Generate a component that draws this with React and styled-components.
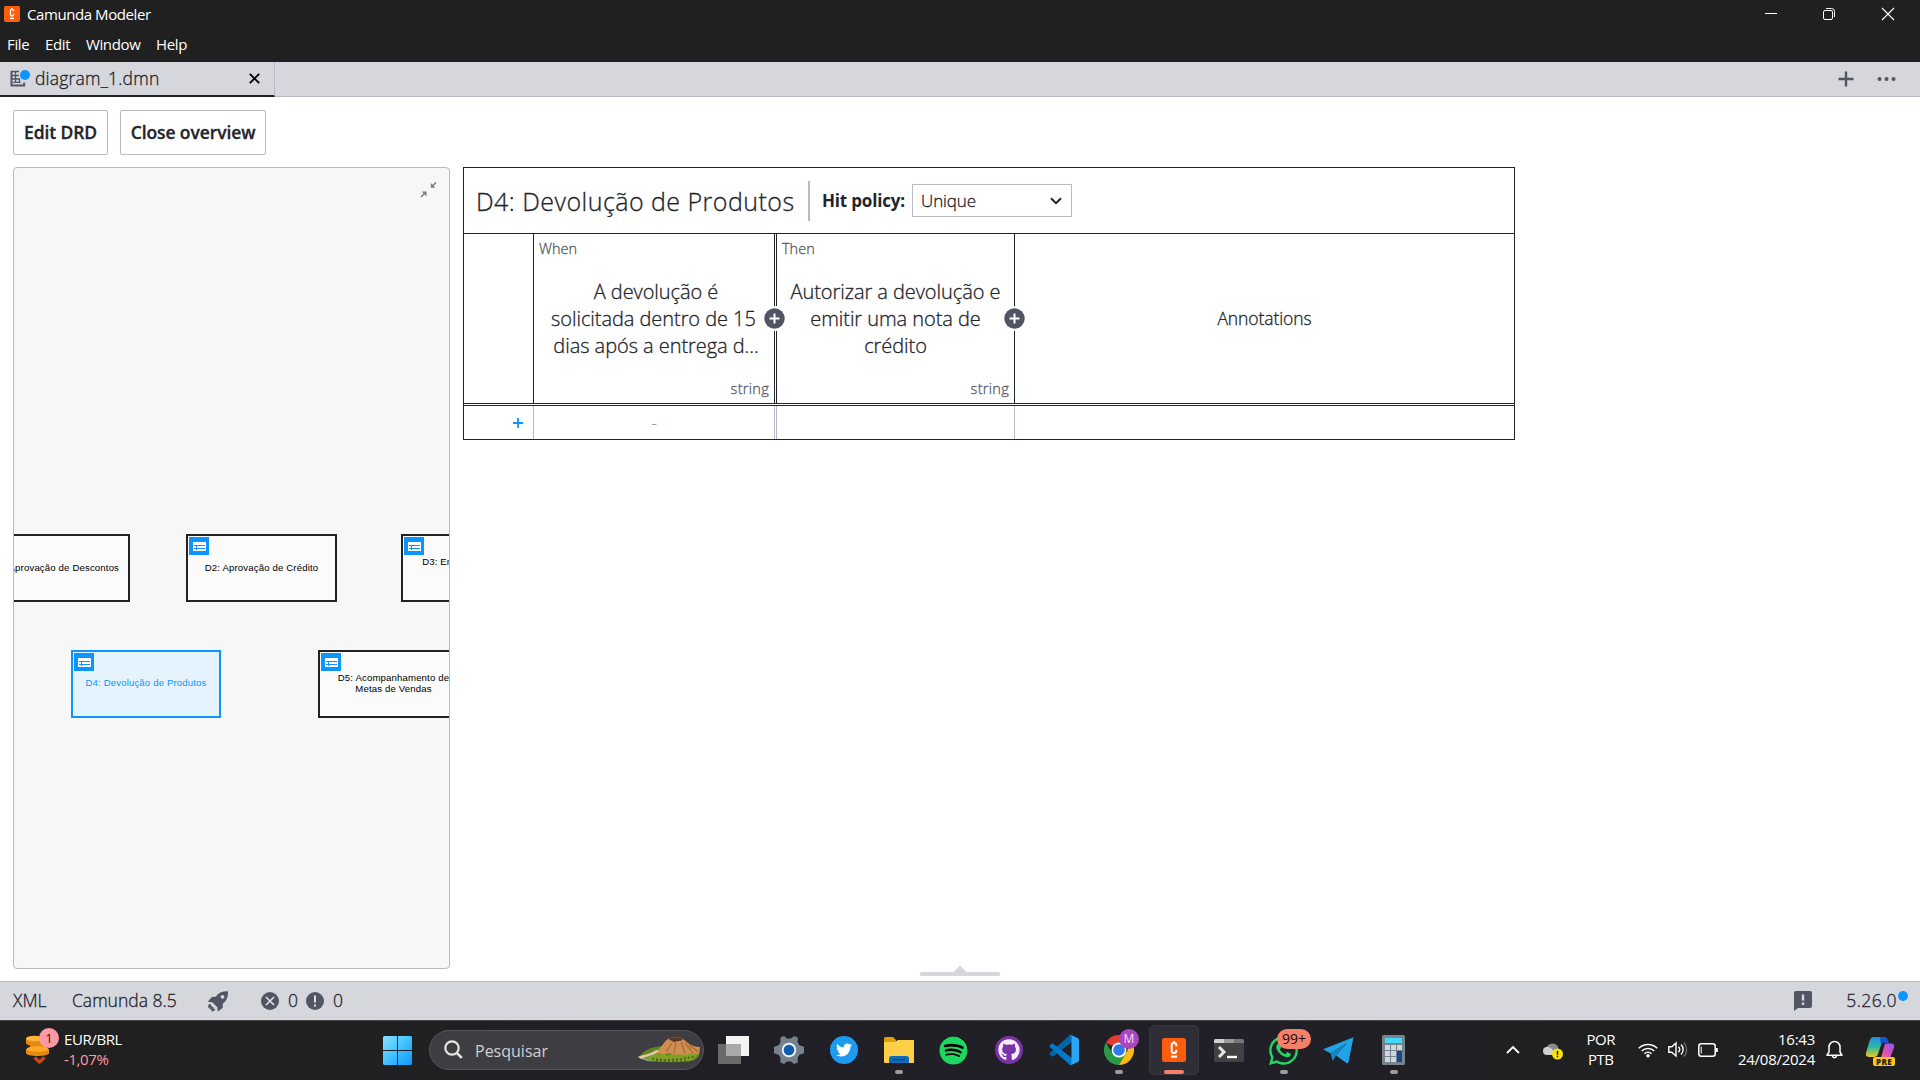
import React from 'react';
import styled, { createGlobalStyle, css } from 'styled-components';
import { FaTwitter, FaSpotify, FaGithub, FaWhatsapp } from 'react-icons/fa';

const ink = '#22242a';
const line = '#b9b9c8';
const bar = '#d6d7dc';
const slate = '#515664';
const blue = '#0d95ff';
const sans = '"Open Sans", "Noto Sans", sans-serif';

const Global = createGlobalStyle`
  * { box-sizing: border-box; }
  html, body { margin: 0; height: 100%; overflow: hidden; }
  #root { height: 100%; }
  svg { display: block; flex: none; }
  button { font: inherit; }
`;

const light = css`
  font-weight: 300;
  -webkit-text-stroke: 0.3px currentColor;
`;
const plain = css`
  -webkit-text-stroke: 0;
`;

const Screen = styled.div`
  display: flex;
  flex-direction: column;
  width: 1920px;
  height: 1080px;
  background: #fff;
  color: ${ink};
  font-family: ${sans};
  font-size: 17.5px;
  ${light}
  white-space: nowrap;
`;

/* Window chrome */
const Chrome = styled.header`
  height: 62px;
  background: #202020;
  color: #fff;
  font-size: 15px;
  font-weight: 400;
  ${plain}
`;
const TitleBar = styled.div`
  display: flex;
  align-items: center;
  height: 28px;
  padding-left: 4px;
  letter-spacing: -0.42px;
`;
const TitleText = styled.div`
  flex: 1;
  margin-left: 7px;
`;
const WindowControls = styled.div`
  display: flex;
  align-items: center;
  gap: 44px;
  padding-right: 25px;
  svg:last-child { margin-left: 1px; }
`;
const MenuBar = styled.nav`
  display: flex;
  align-items: center;
  gap: 15.7px;
  height: 32px;
  padding-left: 7px;
  letter-spacing: -0.36px;
`;

/* Tabs */
const TabBar = styled.div`
  display: flex;
  height: 35px;
  background: ${bar};
  border-bottom: 1px solid ${line};
`;
const Tab = styled.div`
  display: flex;
  align-items: center;
  width: 275px;
  height: 35px;
  padding: 0 14px 0 10px;
  border-right: 1px solid ${line};
  border-bottom: 2px solid ${ink};
`;
const TabName = styled.span`
  flex: 1;
  margin: -1px 0 0 5px;
  letter-spacing: 0.2px;
`;
const TabActions = styled.div`
  display: flex;
  align-items: center;
  gap: 23px;
  margin-left: auto;
  padding-right: 24px;
`;

/* Editor */
const Editor = styled.main`
  flex: 1;
  display: flex;
  flex-direction: column;
  padding: 13px 13px 12px;
`;
const Toolbar = styled.div`
  display: flex;
  gap: 12px;
  margin-bottom: 12px;
`;
const ToolButton = styled.button`
  width: ${(p) => p.$w}px;
  height: 45px;
  padding: 0 0 2px;
  border: 1px solid ${line};
  border-radius: 2px;
  background: #fff;
  color: ${ink};
  font-weight: 600;
  letter-spacing: -0.1px;
`;
const Panes = styled.div`
  display: flex;
  align-items: flex-start;
  gap: 13px;
`;

const Overview = styled.section`
  position: relative;
  width: 437px;
  height: 802px;
  overflow: hidden;
  border: 1px solid ${line};
  border-radius: 4px;
  background: #f7f7f7;
  ${plain}
`;
const Collapse = styled.div`
  position: absolute;
  top: 13px;
  right: 12px;
`;
const Node = styled.div`
  position: absolute;
  left: ${(p) => p.$x}px;
  top: ${(p) => p.$y}px;
  display: flex;
  align-items: center;
  justify-content: center;
  width: ${(p) => p.$w || 151}px;
  height: 68px;
  padding-bottom: ${(p) => p.$lift || 2}px;
  border: 2px solid ${(p) => (p.$active ? blue : '#222')};
  background: ${(p) => (p.$active ? '#e5f3ff' : '#fbfbfb')};
  color: ${(p) => (p.$active ? blue : '#000')};
  font: 400 9.6px/11px "Liberation Sans", Arial, sans-serif;
  letter-spacing: 0.15px;
  text-align: center;
  white-space: pre;
`;
const NodeIcon = styled.span`
  position: absolute;
  left: 1px;
  top: 1px;
`;

/* Decision table */
const Table = styled.section`
  width: 1052px;
  border: 1px solid ${ink};
`;
const TableHead = styled.div`
  display: flex;
  align-items: center;
  height: 66px;
  padding-left: 12px;
  border-bottom: 1px solid ${ink};
`;
const TableTitle = styled.h1`
  width: 332px;
  margin: 1px 0 0;
  font-size: 25px;
  ${light}
  letter-spacing: 0.46px;
`;
const Divider = styled.div`
  width: 2px;
  height: 40px;
  margin-right: 12px;
  background: ${line};
`;
const PolicyLabel = styled.label`
  width: 90px;
  font-weight: 700;
  font-size: 17px;
  letter-spacing: -0.18px;
  ${plain}
`;
const Select = styled.div`
  display: flex;
  align-items: center;
  justify-content: space-between;
  width: 160px;
  height: 33px;
  padding: 0 9px 0 8px;
  border: 1px solid ${line};
  font-size: 17px;
  letter-spacing: -0.1px;
`;
const Columns = styled.div`
  display: grid;
  grid-template-columns: 69px 241px 240px 1fr;
`;
const HeadRow = styled(Columns)`
  height: 170px;
  border-bottom: 1px solid ${ink};
`;
const RuleRow = styled(Columns)`
  height: 34px;
  margin-top: 1px;
  border-top: 1px solid ${ink};
`;
const cellBorder = (color) => css`
  border-left: ${(p) => (p.$double ? `3px double ${color}` : p.$first ? '0' : `1px solid ${color}`)};
`;
const HeadCell = styled.div`
  position: relative;
  display: grid;
  grid-template-rows: 29px 1fr 30px;
  padding: 0 5px;
  ${cellBorder(ink)}
`;
const Small = styled.div`
  align-self: center;
  justify-self: ${(p) => (p.$end ? 'end' : 'start')};
  color: #555962;
  font-size: 14.5px;
  letter-spacing: ${(p) => (p.$end ? 0.3 : 0)}px;
`;
const Expression = styled.div`
  align-self: center;
  padding: 1px 0 0 ${(p) => p.$indent || 0}px;
  font-size: 20px;
  line-height: 27px;
  letter-spacing: -0.06px;
  text-align: center;
  white-space: pre;
`;
const AnnotationHead = styled.div`
  display: flex;
  align-items: center;
  justify-content: center;
  padding-bottom: 2px;
  letter-spacing: -0.08px;
  ${cellBorder(ink)}
`;
const AddColumn = styled.div`
  position: absolute;
  top: 72px;
  right: -11px;
  z-index: 1;
  display: flex;
  align-items: center;
  height: 25px;
  background: #fff;
`;
const RuleCell = styled.div`
  display: flex;
  align-items: center;
  justify-content: ${(p) => (p.$first ? 'flex-end' : 'center')};
  padding-right: ${(p) => (p.$first ? 10 : 0)}px;
  color: #9da0ac;
  ${cellBorder(line)}
`;

/* Bottom panel */
const Resizer = styled.div`
  display: flex;
  justify-content: center;
  height: 0;
  svg { margin-top: -16px; z-index: 1; }
`;
const StatusBar = styled.footer`
  display: flex;
  align-items: center;
  height: 39px;
  padding: 0 12px 0 13px;
  border-top: 1px solid ${line};
  background: ${bar};
`;
const StatusItem = styled.div`
  display: flex;
  align-items: center;
  gap: ${(p) => p.$gap || 0}px;
  width: ${(p) => p.$w}px;
`;
const StatusText = styled.span`
  margin-top: -2px;
`;
const StatusEnd = styled.div`
  display: flex;
  align-items: center;
  gap: 34px;
  margin-left: auto;
`;
const Version = styled.div`
  display: flex;
  margin-top: -2px;
  letter-spacing: 0.4px;
`;
const UpdateDot = styled.i`
  width: 10px;
  height: 10px;
  margin: 3px 0 0 1px;
  border-radius: 50%;
  background: ${blue};
`;

/* Windows taskbar */
const Taskbar = styled.div`
  display: flex;
  align-items: center;
  height: 60px;
  border-top: 1px solid #47474a;
  background: linear-gradient(90deg, #202020 0, #202020 14%, #211f26 34%, #211f27 66%, #202020 86%);
  color: #fff;
  font-size: 15px;
  font-weight: 400;
  ${plain}
`;
const Widget = styled.div`
  display: flex;
  align-items: center;
  width: 370px;
  height: 59px;
  padding: 0 0 3px 25px;
`;
const TwoLines = styled.div`
  margin-left: ${(p) => p.$ml || 0}px;
  line-height: 20px;
  letter-spacing: ${(p) => p.$ls}px;
  text-align: ${(p) => p.$align || 'left'};
  em { color: #ff99a4; font-style: normal; }
`;
const CoinBox = styled.div`
  position: relative;
  width: 34px;
  height: 42px;
`;
const CoinBadge = styled.span`
  position: absolute;
  left: 14px;
  top: 0;
  width: 20px;
  height: 20px;
  border-radius: 50%;
  background: #ff99a4;
  color: #222;
  font-size: 13px;
  line-height: 20px;
  text-align: center;
`;
const TaskSlot = styled.div`
  position: relative;
  display: flex;
  align-items: center;
  justify-content: center;
  width: 55px;
  height: 50px;
  margin-bottom: 1px;
`;
const ActivePlate = styled.div`
  display: flex;
  align-items: center;
  justify-content: center;
  width: 50px;
  height: 50px;
  border: 1px solid #38363f;
  border-radius: 5px;
  background: #2f2d36;
`;
const Indicator = styled.i`
  position: absolute;
  left: 50%;
  bottom: 1px;
  width: ${(p) => (p.$active ? 20 : 8)}px;
  height: 4px;
  margin-left: ${(p) => (p.$active ? -10 : -4)}px;
  border-radius: 2px;
  background: ${(p) => (p.$active ? '#f4806a' : '#9c9ca0')};
`;
const Disc = styled.div`
  display: flex;
  align-items: center;
  justify-content: center;
  width: 28px;
  height: 28px;
  border-radius: 50%;
  background: ${(p) => p.$bg};
`;
const Search = styled.div`
  display: flex;
  align-items: center;
  width: 275px;
  height: 40px;
  margin: 0 2px 2px 4px;
  padding: 0 3px 0 14px;
  border: 1px solid #56555a;
  border-radius: 20px;
  background: #3e3d42;
  color: #d0d0d2;
  font-size: 16px;
  letter-spacing: 0;
`;
const SearchText = styled.span`
  flex: 1;
  margin: 2px 0 0 12px;
`;
const Badge = styled.span`
  position: absolute;
  left: ${(p) => p.$x}px;
  top: ${(p) => p.$y}px;
  width: ${(p) => p.$w}px;
  height: 20px;
  border-radius: 10px;
  background: ${(p) => p.$bg};
  color: ${(p) => p.$fg};
  font-size: ${(p) => p.$size}px;
  line-height: 20px;
  text-align: center;
`;
const Tray = styled.div`
  display: flex;
  align-items: center;
  margin-left: auto;
  padding: 0 24px 3px 0;
`;
const TrayIcon = styled.div`
  margin: ${(p) => p.$top || 0}px 0 0 ${(p) => p.$ml}px;
`;
const Copilot = styled.div`
  position: relative;
  margin-left: 23px;
  margin-top: 4px;
`;
const Pre = styled.span`
  position: absolute;
  left: 7px;
  bottom: -1px;
  width: 22px;
  height: 9px;
  border-radius: 2px;
  background: #ffc61a;
  color: #222;
  font-size: 8px;
  font-weight: 800;
  line-height: 9px;
  letter-spacing: 0.3px;
  text-align: center;
`;

const CamundaLogo = ({ size }) => (
  <svg width={size} height={size} viewBox="0 0 24 24">
    <rect width="24" height="24" rx="2.5" fill="#fc5d0d" />
    <path d="M14.3 8.2V7c0-1.400-.9-2-2.300-2s-2.300.7-2.300 2.100v5.800c0 1.400.9 2.100 2.300 2.100s2.300-.7 2.300-2.100v-1.100M12 3v2" fill="none" stroke="#fff" strokeWidth="2" />
    <path d="M9 18.600h6" stroke="#fff" strokeWidth="2.200" />
  </svg>
);

const DmnTabIcon = () => (
  <svg width="20" height="17" viewBox="0 0 20 17">
    <path d="M1.500 1v14.500h12.700v-3" fill="none" stroke={slate} strokeWidth="2" />
    <path d="M1 1.500h8M5.500 1v11.500M1 5.500h8M1 9h9M3 12.300h7.500M9.500 8v4.500" fill="none" stroke={slate} strokeWidth="1.300" />
    <circle cx="15" cy="5" r="5" fill={blue} />
  </svg>
);

const TableGlyph = () => (
  <NodeIcon>
    <svg width="20" height="18" viewBox="0 0 20 18" shapeRendering="crispEdges">
      <path d="M0 0h20v18H0z" fill={blue} />
      <path d="M4 5h13v9H4z" fill="#fff" />
      <path d="M5 8h11v1H5zM5 11h11v1H5zM7 8h1v5H7z" fill={blue} />
    </svg>
  </NodeIcon>
);

const PlusDisc = () => (
  <svg width="21" height="21" viewBox="0 0 21 21">
    <circle cx="10.500" cy="10.500" r="10.200" fill="#4f5563" />
    <path d="M10.500 5.500v10M5.500 10.500h10" stroke="#fff" strokeWidth="2" />
  </svg>
);

const nodes = [
  { x: -34, y: 366, w: 150, text: 'D1: Aprovação de Descontos' },
  { x: 172, y: 366, text: 'D2: Aprovação de Crédito' },
  { x: 387, y: 366, text: 'D3: Encaminhamento de\nPedidos', lift: 3 },
  { x: 57, y: 482, w: 150, text: 'D4: Devolução de Produtos', active: true, lift: 4 },
  { x: 304, y: 482, text: 'D5: Acompanhamento de\nMetas de Vendas', lift: 3 },
];

const Windows = () => (
  <svg width="29" height="29" viewBox="0 0 29 29">
    <defs>
      <linearGradient id="win" x1="0" y1="0" x2="1" y2="1">
        <stop offset="0" stopColor="#8be0ff" />
        <stop offset=".5" stopColor="#42c2ff" />
        <stop offset="1" stopColor="#0a96ff" />
      </linearGradient>
    </defs>
    <path d="M1 0h13v14H0V1zM15 0h13l1 1v13H15zM0 15h14v14H1l-1-1zM15 15h14v13l-1 1H15z" fill="url(#win)" />
  </svg>
);

const Volcano = () => (
  <svg width="62" height="26" viewBox="0 0 62 26">
    <path d="M0 20c4-3 8-8 15-9.500l8-1.500 30 6 9-5-1 9c-4 6-12 6-20 6-14 0-30 1-41-5z" fill="#5f8420" />
    <path d="M2 20c5 1 8 3 14 4-6 1-12-1-14-4z" fill="#7fae8c" />
    <path d="M18 15C24 10 27 3 31 1.500 35-.3 42 0 45 2c4 3 8 8 17 8l-1 7-4 2-4-1-4 2-6-2-5 1-7-3-6 2z" fill="#d08f52" />
    <path d="M30.500 2c4-2.500 11-2 14.500.5-3 2.500-7 1-8.500 3-2-2-4-1.500-6-3.500z" fill="#5a3824" />
    <path d="M34 6l-6 9M38 6l-2 10M43 5l4 11M47 6l8 10M51 8.500l9 6" stroke="#a9622c" strokeWidth="1.100" fill="none" />
    <path d="M0 20c7-3 13-3 18-7l3 1c-5 5-12 5-18 8z" fill="#e8c8a8" />
    <path d="M8 21c4-4 8-2 11-5 4 2 7 0 10 3 5-3 9 0 13-2 5 2 10-1 18-1-2 7-10 9-24 9-11 0-22 0-28-4z" fill="#82a028" />
    <path d="M14 21.500c8 2 26 2 42-2M18 24c10 1 22 1 32-.5" stroke="#48691a" strokeWidth="1.800" strokeDasharray="2 2" fill="none" />
  </svg>
);

const TaskView = () => (
  <svg width="31" height="28" viewBox="0 0 31 28">
    <path d="M8 0h23v20H8z" fill="#f4f4f4" />
    <path d="M0 8h23v20H0z" fill="#6a6a6a" />
    <path d="M8 8h15v12H8z" fill="#a9a9a9" />
  </svg>
);

const Gear = () => (
  <svg width="30" height="28" viewBox="0 0 30 28">
    <path d="M6.400 1.500 10 0l3 2.500h4L20 0l3.800 1.500-.1 5 1.800 2.800 4.500 1.500v6.400l-4.500 1.500-1.800 2.800.1 5L20 28l-3-2.500h-4L10 28l-3.600-1.500v-5l-1.900-2.800L0 17.200v-6.400l4.500-1.500 1.900-2.800z" fill="#75818c" />
    <circle cx="15" cy="14" r="6.300" fill="#0d5cb0" stroke="#eef2f5" strokeWidth="1.900" />
  </svg>
);

const Folder = () => (
  <svg width="30" height="27" viewBox="0 0 30 27">
    <path d="M0 1.500C0 .5.7 0 1.500 0H9l3 3v6H0z" fill="#dfa006" />
    <path d="M0 5h11l3-2h16v23H1.500C.5 26 0 25.500 0 24.500z" fill="#ffcf48" />
    <path d="M5 26v-4.500C5 20 6 19 7.500 19h15c1.500 0 2.500 1 2.500 2.500V26z" fill="#0f6cbd" />
    <path d="M9 22.700h12" stroke="#0a4a86" strokeWidth="1.300" />
  </svg>
);

const VsCode = () => (
  <svg width="30" height="30" viewBox="0 0 100 100">
    <path d="M96 11 75 1c-2-1-5-1-7 1L3 60c-2 2-2 4 0 6l6 5c1 1 3 1 5 0l78-59c3-2 7 0 7 3z" fill="#0065a9" />
    <path d="M96 89 75 99c-2 1-5 1-7-1L3 40c-2-2-2-4 0-6l6-5c1-1 3-1 5 0l78 59c3 2 7 0 7-3z" fill="#007acc" />
    <path d="M75 99c-3 1-6 0-7-2 2 3 7 1 7-3V6c0-4-5-6-7-3 1-3 4-3 7-2l21 10c2 1 4 3 4 6v67c0 3-2 5-4 6z" fill="#2ba5f5" />
  </svg>
);

const ChromeLogo = () => (
  <svg width="30" height="30" viewBox="0 0 48 48">
    <path d="M24 24 3.200 12A24 24 0 0 1 44.800 12H24z" fill="#e33b2e" />
    <path d="M3.200 12A24 24 0 0 0 24 48L34.400 30 24 24 13.600 30z" fill="#2b9a47" />
    <path d="M44.800 12A24 24 0 0 1 24 48l10.400-18A12 12 0 0 0 34 12z" fill="#fbbc12" />
    <circle cx="24" cy="24" r="12" fill="#fff" />
    <circle cx="24" cy="24" r="9.300" fill="#2f7bea" />
  </svg>
);

const Terminal = () => (
  <svg width="30" height="23" viewBox="0 0 30 23">
    <rect width="30" height="23" rx="1.500" fill="#424242" />
    <path d="M0 4V1.500Q0 0 1.500 0H10v4z" fill="#d0d0d0" />
    <path d="M10 0h10v4H10z" fill="#9c9c9c" />
    <path d="M20 0h8.500Q30 0 30 1.500V4H20z" fill="#777" />
    <path d="m5 8 5 5-5 5" fill="none" stroke="#e4e4e4" strokeWidth="3" />
    <path d="M13 18h10" stroke="#fff" strokeWidth="2.400" />
  </svg>
);

const Plane = () => (
  <svg width="31" height="27" viewBox="0 0 31 27">
    <path d="M30.500.2 0 12.200l7.500 4L24 6 13 18.500 23.500 26q1.500.8 2-1z" fill="#22a3e6" />
    <path d="m7.500 16.200 2.300 8L13 18.500 24 6z" fill="#1585c4" />
  </svg>
);

const Calculator = () => (
  <svg width="23" height="30" viewBox="0 0 23 30">
    <rect width="23" height="30" rx="1.500" fill="#78838d" />
    <path d="M3 3h17v5H3z" fill="#41d8fb" />
    <path d="M3 10h5v5H3zm6 0h5v5H9zm6 0h5v5h-5zM3 16h5v5H3zm6 0h5v5H9zM3 22h5v5H3zm6 0h5v5H9z" fill="#cfd6dc" />
    <path d="M15 16h5v11h-5z" fill="#124a8c" />
  </svg>
);

const Coins = () => (
  <svg width="26" height="42" viewBox="0 0 26 42">
    <g fill="#e58a10">
      <path d="M1 10v5c0 4 17 4 17 0v-5z" />
      <path d="M5 16v5c0 4 17 4 17 0v-5z" />
      <path d="M1 21v4c0 4 23 4 23 0v-4z" />
    </g>
    <ellipse cx="9.500" cy="10.500" rx="8.500" ry="2.800" fill="#ffb53a" />
    <ellipse cx="12.500" cy="21" rx="11" ry="2.800" fill="#ffa726" />
    <path d="m9.500 29.500 5 4.500 5-4.500" fill="none" stroke="#cc4317" strokeWidth="3.500" />
  </svg>
);

const TaskApp = ({ running, active, children }) => (
  <TaskSlot>
    {active ? <ActivePlate>{children}</ActivePlate> : children}
    {(running || active) && <Indicator $active={active} />}
  </TaskSlot>
);

export default function App() {
  return (
    <Screen>
      <Global />
      <Chrome>
        <TitleBar>
          <CamundaLogo size={16} />
          <TitleText>Camunda Modeler</TitleText>
          <WindowControls>
            <svg width="14" height="14" viewBox="0 0 14 14"><path d="M1 6.500h12" stroke="#fff" /></svg>
            <svg width="14" height="14" viewBox="0 0 14 14" fill="none" stroke="#fff">
              <rect x="1.500" y="3.500" width="9" height="9" rx="1.500" />
              <path d="M4 1.500h5.500q3 0 3 3V10" />
            </svg>
            <svg width="14" height="14" viewBox="0 0 14 14"><path d="m1 1 12 12M13 1 1 13" stroke="#fff" strokeWidth="1.100" /></svg>
          </WindowControls>
        </TitleBar>
        <MenuBar>
          <span>File</span><span>Edit</span><span>Window</span><span>Help</span>
        </MenuBar>
      </Chrome>

      <TabBar>
        <Tab>
          <DmnTabIcon />
          <TabName>diagram_1.dmn</TabName>
          <svg width="11" height="11" viewBox="0 0 11 11"><path d="m.8.8 9.400 9.400M10.200.8.8 10.200" stroke="#000" strokeWidth="1.900" /></svg>
        </Tab>
        <TabActions>
          <svg width="16" height="16" viewBox="0 0 16 16"><path d="M8 .5v15M.5 8h15" stroke={slate} strokeWidth="2.400" /></svg>
          <svg width="19" height="4" viewBox="0 0 19 4" fill={slate}>
            <circle cx="2.500" cy="2" r="2" /><circle cx="9.500" cy="2" r="2" /><circle cx="16.500" cy="2" r="2" />
          </svg>
        </TabActions>
      </TabBar>

      <Editor>
        <Toolbar>
          <ToolButton $w={95}>Edit DRD</ToolButton>
          <ToolButton $w={146}>Close overview</ToolButton>
        </Toolbar>
        <Panes>
          <Overview>
            <Collapse>
              <svg width="17" height="17" viewBox="0 0 17 17" fill="#7c7c7c" stroke="#7c7c7c">
                <path d="M10.800 2v4.800h4.700z" stroke="none" />
                <path d="m12.500 5 3.500-3.500M1 16l3.500-3.500" strokeWidth="1.500" />
                <path d="M6.500 15.500v-5H1.800z" stroke="none" />
              </svg>
            </Collapse>
            {nodes.map((n) => (
              <Node key={n.text} $x={n.x} $y={n.y} $w={n.w} $active={n.active} $lift={n.lift}>
                <TableGlyph />
                {n.text}
              </Node>
            ))}
          </Overview>

          <Table>
            <TableHead>
              <TableTitle>D4: Devolução de Produtos</TableTitle>
              <Divider />
              <PolicyLabel>Hit policy:</PolicyLabel>
              <Select>
                Unique
                <svg width="12" height="8" viewBox="0 0 12 8"><path d="m1 1.200 5 5 5-5" fill="none" stroke={ink} strokeWidth="2" /></svg>
              </Select>
            </TableHead>
            <HeadRow>
              <HeadCell $first />
              <HeadCell>
                <Small>When</Small>
                <Expression $indent={4}>{'A devolução é\nsolicitada dentro de 15 \ndias após a entrega d...'}</Expression>
                <Small $end>string</Small>
                <AddColumn><PlusDisc /></AddColumn>
              </HeadCell>
              <HeadCell $double>
                <Small>Then</Small>
                <Expression>{'Autorizar a devolução e\nemitir uma nota de\ncrédito'}</Expression>
                <Small $end>string</Small>
                <AddColumn><PlusDisc /></AddColumn>
              </HeadCell>
              <AnnotationHead>Annotations</AnnotationHead>
            </HeadRow>
            <RuleRow>
              <RuleCell $first>
                <svg width="10" height="10" viewBox="0 0 10 10"><path d="M5 0v10M0 5h10" stroke={blue} strokeWidth="1.800" /></svg>
              </RuleCell>
              <RuleCell>-</RuleCell>
              <RuleCell $double />
              <RuleCell />
            </RuleRow>
          </Table>
        </Panes>
      </Editor>

      <Resizer>
        <svg width="80" height="12" viewBox="0 0 80 12">
          <rect y="7" width="80" height="4" rx="1.500" fill={bar} />
          <path d="m33 7.500 7-7 7 7z" fill={bar} />
        </svg>
      </Resizer>
      <StatusBar>
        <StatusItem $w={59}><StatusText>XML</StatusText></StatusItem>
        <StatusItem $w={135}><StatusText>Camunda 8.5</StatusText></StatusItem>
        <StatusItem $w={54}>
          <svg width="22" height="21" viewBox="0 0 22 21" fill={slate}>
            <path fillRule="evenodd" d="M21 .3c-5.500-.2-9.500 1.600-12.300 5.400L4.800 6 .8 10.800l4.400.5 5.200 5 .4 4.400 4.900-4 .1-3.900C19.600 9.900 21.200 6 21 .3zM15.500 3.900a1.900 1.900 0 1 1 0 3.800 1.900 1.900 0 0 1 0-3.800z" />
            <path d="M2.500 12.800c-1.600 1-1.500 3.300-1 4.500l1.200-1.100v2.300l2-.2L4.300 20.500c2.300.2 3.700-1 4-2.500l-1.800-.3-.2-1.700-1.700-.3-.3-1.800z" />
          </svg>
        </StatusItem>
        <StatusItem $w={45} $gap={9}>
          <svg width="18" height="18" viewBox="0 0 18 18"><circle cx="9" cy="9" r="9" fill={slate} /><path d="m5 5 8 8M13 5l-8 8" stroke="#e6e7eb" strokeWidth="1.500" /></svg>
          <StatusText>0</StatusText>
        </StatusItem>
        <StatusItem $gap={9}>
          <svg width="18" height="18" viewBox="0 0 18 18"><circle cx="9" cy="9" r="9" fill={slate} /><path d="M9 3.500v7M9 12.500v2" stroke="#e6e7eb" strokeWidth="1.900" /></svg>
          <StatusText>0</StatusText>
        </StatusItem>
        <StatusEnd>
          <svg width="18" height="20" viewBox="0 0 18 20"><path d="M2 0h14a2 2 0 0 1 2 2v13a2 2 0 0 1-2 2H4l-4 3V2a2 2 0 0 1 2-2z" fill={slate} /><path d="M9 3.500v6M9 11.500V14" stroke={bar} strokeWidth="2.400" /></svg>
          <Version>5.26.0<UpdateDot /></Version>
        </StatusEnd>
      </StatusBar>

      <Taskbar>
        <Widget>
          <CoinBox>
            <Coins />
            <CoinBadge>1</CoinBadge>
          </CoinBox>
          <TwoLines $ml={5} $ls={-0.4}>EUR/BRL<br /><em>-1,07%</em></TwoLines>
        </Widget>
        <TaskApp><Windows /></TaskApp>
        <Search>
          <svg width="19" height="19" viewBox="0 0 19 19" fill="none" stroke="#e6e6e6" strokeWidth="2.200"><circle cx="8" cy="8" r="6.700" /><path d="m12.800 12.800 5 5" strokeWidth="2.600" /></svg>
          <SearchText>Pesquisar</SearchText>
          <Volcano />
        </Search>
        <TaskApp><TaskView /></TaskApp>
        <TaskApp><Gear /></TaskApp>
        <TaskApp><Disc $bg="#1d9bf0"><FaTwitter size={16} color="#fff" /></Disc></TaskApp>
        <TaskApp running><Folder /></TaskApp>
        <TaskApp><Disc $bg="#000"><FaSpotify size={29} color="#1fd760" /></Disc></TaskApp>
        <TaskApp><Disc $bg="#7a32a8"><FaGithub size={22} color="#f4eef8" /></Disc></TaskApp>
        <TaskApp><VsCode /></TaskApp>
        <TaskApp running>
          <ChromeLogo />
          <Badge $x={28} $y={4} $w={20} $bg="#ab47bc" $fg="#f3dcf6" $size={12}>M</Badge>
        </TaskApp>
        <TaskApp active><CamundaLogo size={24} /></TaskApp>
        <TaskApp><Terminal /></TaskApp>
        <TaskApp running>
          <FaWhatsapp size={33} color="#25d366" />
          <Badge $x={21} $y={4} $w={34} $bg="#f4806a" $fg="#111" $size={14}>99+</Badge>
        </TaskApp>
        <TaskApp><Plane /></TaskApp>
        <TaskApp running><Calculator /></TaskApp>

        <Tray>
          <svg width="14" height="9" viewBox="0 0 14 9"><path d="m1 8 6-6 6 6" fill="none" stroke="#fff" strokeWidth="1.800" /></svg>
          <TrayIcon $ml={23} $top={4}>
            <svg width="20" height="18" viewBox="0 0 20 18">
              <path d="M4 13a4 4 0 0 1-.5-7.500A6.500 6.500 0 0 1 15 4.500l1 6-6 2.500z" fill="#8a8a8a" />
              <path d="M4 13a4 4 0 0 1 0-8c3 0 5 1 6 4v4z" fill="#cfcfcf" />
              <circle cx="14.500" cy="12" r="5.500" fill="#fbe20a" />
              <path d="M14.500 8.800v4M14.500 13.700v1.500" stroke="#222" strokeWidth="1.500" />
            </svg>
          </TrayIcon>
          <TwoLines $ml={24} $ls={-0.5} $align="center">POR<br />PTB</TwoLines>
          <TrayIcon $ml={23} $top={1}>
            <svg width="20" height="16" viewBox="0 0 20 16" fill="none" stroke="#fff" strokeWidth="1.500">
              <path d="M.8 6.300a13 13 0 0 1 18.400 0M3.700 9a9 9 0 0 1 12.600 0M6.500 11.700a5 5 0 0 1 7 0" />
              <circle cx="10" cy="13.800" r="1.500" fill="#fff" strokeWidth=".5" />
            </svg>
          </TrayIcon>
          <TrayIcon $ml={10} $top={1}>
            <svg width="21" height="17" viewBox="0 0 21 17" fill="none" stroke="#fff" strokeWidth="1.400">
              <path d="M.8 5.800h3L8 2v13l-4.200-3.800h-3zM10.500 5.800a4 4 0 0 1 0 5.400M13 3.500a7 7 0 0 1 0 10" />
              <path d="M15.800 1.500a10 10 0 0 1 0 14" stroke="#6c6c6c" />
            </svg>
          </TrayIcon>
          <TrayIcon $ml={9} $top={1}>
            <svg width="20" height="14" viewBox="0 0 20 14" fill="none" stroke="#fff" strokeWidth="1.500">
              <rect x=".8" y=".8" width="16.400" height="12.400" rx="2.500" />
              <path d="M3.300 3.500v7" stroke="#bbb" strokeWidth="1.500" />
              <path d="M18.800 5v4" strokeWidth="2" />
            </svg>
          </TrayIcon>
          <TwoLines $ml={20} $ls={-0.26} $align="right">16:43<br />24/08/2024</TwoLines>
          <TrayIcon $ml={11} $top={1}>
            <svg width="17" height="19" viewBox="0 0 17 19" fill="none" stroke="#fff" strokeWidth="1.500">
              <path d="M3 12V7a5.500 5.500 0 0 1 11 0v5l2 3.200H1z" strokeLinejoin="round" />
              <path d="M6.300 16a2.300 2.300 0 0 0 4.400 0" />
            </svg>
          </TrayIcon>
          <Copilot>
            <svg width="30" height="28" viewBox="0 0 30 28">
              <defs>
                <linearGradient id="cpA" x1="0" y1="0" x2="0" y2="1">
                  <stop offset="0" stopColor="#1a8fe8" /><stop offset=".5" stopColor="#2fb8a0" /><stop offset="1" stopColor="#f0c818" />
                </linearGradient>
                <linearGradient id="cpB" x1="1" y1="0" x2="0" y2="1">
                  <stop offset="0" stopColor="#8a5cf0" /><stop offset=".5" stopColor="#d850b8" /><stop offset="1" stopColor="#ff7a5c" />
                </linearGradient>
              </defs>
              <path d="M8 0h12q-3 1-4 5l-4 12q-1 3-4 3H3q-4 0-3-4L3.500 4Q4.500 0 8 0z" fill="url(#cpA)" />
              <path d="M14 0h5q2 0 3 3l1 3h-5q-2 0-3 2z" fill="#1b4fd0" />
              <path d="M20 6.500h5q4 0 3 4l-3 8q-1 4-5 4h-8q3-1 4-5l2-8q.5-3 2-3z" fill="url(#cpB)" />
            </svg>
            <Pre>PRE</Pre>
          </Copilot>
        </Tray>
      </Taskbar>
    </Screen>
  );
}
